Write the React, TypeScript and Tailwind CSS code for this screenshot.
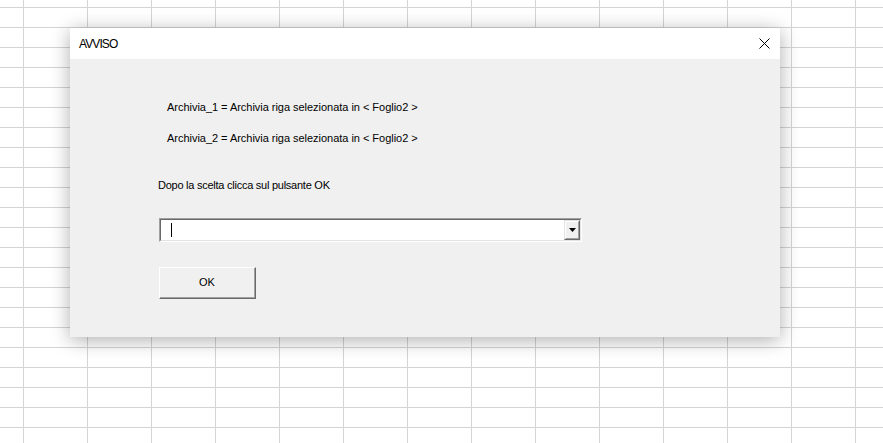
import React from 'react';

const font = { fontFamily: '"Liberation Sans", Arial, sans-serif' };

const CloseIcon = () => (
  <svg width="11" height="11" viewBox="0 0 11 11" className="block">
    <path d="M0.5 0.5 L10.5 10.5 M10.5 0.5 L0.5 10.5" stroke="#000" strokeWidth="1" />
  </svg>
);

const ComboBox = () => (
  <div className="w-[423px] h-[24px] border-t border-l border-t-[#a0a0a0] border-l-[#a0a0a0] border-b border-r border-b-white border-r-white">
    <div className="h-full flex border-t border-l border-t-[#696969] border-l-[#696969] border-b border-r border-b-[#e3e3e3] border-r-[#e3e3e3] bg-white">
      <div className="flex-1 flex items-center pl-[10px]">
        <div className="w-px h-[14px] bg-black" />
      </div>
      <div className="w-[16px] h-full border-t border-l border-t-[#e3e3e3] border-l-[#e3e3e3] border-b border-r border-b-[#696969] border-r-[#696969]">
        <div className="h-full flex items-center justify-center bg-[#f0f0f0] border-t border-l border-t-white border-l-white border-b border-r border-b-[#a0a0a0] border-r-[#a0a0a0]">
          <svg width="7" height="4" viewBox="0 0 7 4" className="block">
            <path d="M0 0 H7 L3.5 4 Z" fill="#000" />
          </svg>
        </div>
      </div>
    </div>
  </div>
);

const OkButton = () => (
  <div className="w-[97px] h-[32px] border-t border-l border-t-white border-l-white border-b border-r border-b-[#696969] border-r-[#696969]">
    <div className="h-full flex items-center justify-center bg-[#f0f0f0] border-b border-r border-b-[#a0a0a0] border-r-[#a0a0a0] text-[11px] leading-[13px] text-black">
      OK
    </div>
  </div>
);

export default function App() {
  return (
    <div
      className="w-[883px] h-[443px] overflow-hidden bg-white bg-[linear-gradient(to_right,#d4d4d4_1px,transparent_1px),linear-gradient(to_bottom,#d4d4d4_1px,transparent_1px)] bg-[length:64px_20px] bg-[position:23px_7px] pl-[70px] pt-[28px]"
      style={font}
    >
      <div className="w-[710px] h-[309px] flex flex-col shadow-[0_3px_18px_rgba(0,0,0,0.32)]">
        <div className="h-[31px] bg-white flex items-center justify-between pl-[9px] pr-[10px]">
          <span className="text-[12px] tracking-[-0.9px] text-black">AVVISO</span>
          <CloseIcon />
        </div>
        <div className="flex-1 bg-[#f0f0f0] pt-[42px] pl-[88px] text-[11px] leading-[13px] text-black">
          <div className="pl-[9px] tracking-[-0.03px]">Archivia_1 = Archivia riga selezionata in &lt; Foglio2 &gt;</div>
          <div className="pl-[9px] mt-[18px] tracking-[-0.03px]">Archivia_2 = Archivia riga selezionata in &lt; Foglio2 &gt;</div>
          <div className="mt-[34px] tracking-[-0.25px]">Dopo la scelta clicca sul pulsante OK</div>
          <div className="mt-[26px] pl-[1px]">
            <ComboBox />
          </div>
          <div className="mt-[25px] pl-[1px]">
            <OkButton />
          </div>
        </div>
      </div>
    </div>
  );
}
